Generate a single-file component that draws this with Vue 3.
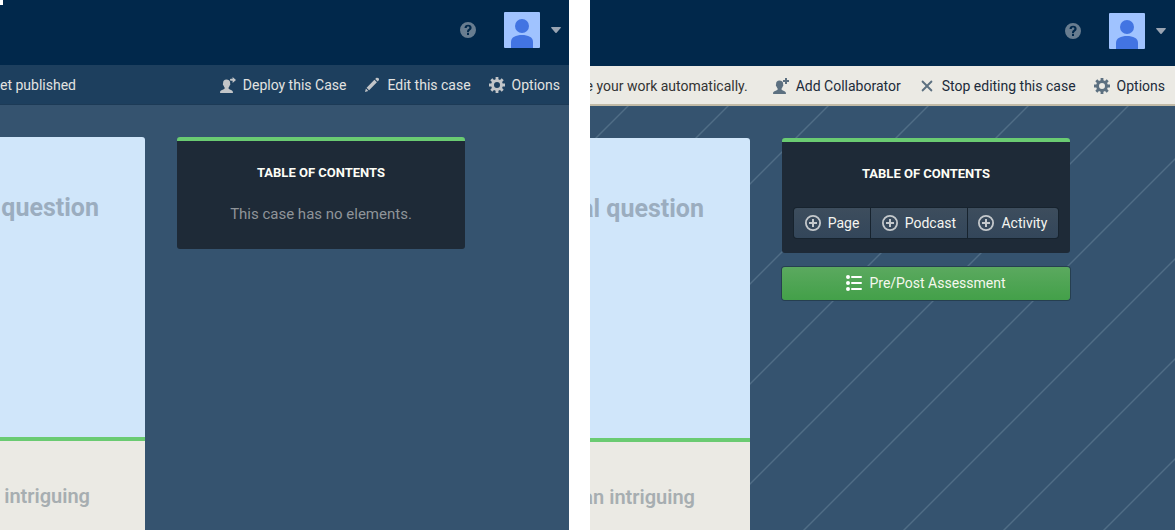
<script setup>
import { h } from 'vue'

const shapes = {
  deploy: [
    'M6.4 2.4C4.3 2.4 3 3.8 3.1 6c0 .7-.4.8-.2 1.6.2.7.6.8.7 1.2.2.8.7 1.1 1 1.6v1.2C4.3 12.7.1 13.2.1 15v1h12.8v-1c0-1.8-4-2.3-4.300-3.400v-1.200c.3-.5.8-.8 1-1.600.1-.4.5-.5.700-1.200.2-.8-.2-.9-.2-1.600V4.900C9.800 3.400 8.500 2.400 6.400 2.400z',
    'M12.6 0v1.800H10.900c-1.200 0-1.200 2 0 2H12.600v2.200L16 2.900z',
  ],
  collaborator: [
    'M6.4 2.4C4.3 2.4 3 3.8 3.1 6c0 .7-.4.8-.2 1.6.2.7.6.8.7 1.2.2.8.7 1.1 1 1.6v1.2C4.3 12.7.1 13.2.1 15v1h12.8v-1c0-1.8-4-2.3-4.300-3.400v-1.200c.3-.5.8-.8 1-1.600.1-.4.5-.5.700-1.200.2-.8-.2-.9-.2-1.600V4.900C9.800 3.400 8.500 2.400 6.400 2.400z',
    'M12 0h2v2h2v2h-2v2h-2V4h-2V2h2z',
  ],
  edit: ['M12.1 1.1c.7-.6 2-.4 2.5.2.6.7.6 1.7 0 2.3l-.9.9-2.5-2.5zM10.4 2.8l2.5 2.5-7.8 7.9-2.5-2.5zM1.9 11.5l2.4 2.4L1 15z'],
  cross: ['M4.200 2.800 8 6.600l3.800-3.800c.9-.7 2 .4 1.400 1.400L9.400 8l3.800 3.800c.6 1-.5 2.100-1.400 1.400L8 9.400l-3.800 3.800c-.9.7-2-.4-1.400-1.400L6.600 8 2.800 4.200c-.6-1 .5-2.100 1.400-1.400z'],
  cog: ['M6.600 0h2.800v2.300l1.600.6 1.700-1.600 2 2-1.600 1.700.6 1.600H16v2.800h-2.300l-.6 1.600 1.600 1.700-2 2-1.700-1.600-1.600.6V16H6.600v-2.300L5 13.100l-1.700 1.600-2-2L2.900 11l-.6-1.600H0V6.600h2.300L2.900 5 1.300 3.300l2-2L5 2.900l1.600-.6zM8 5a3 3 0 1 0 0 6 3 3 0 0 0 0-6z'],
  add: ['M8 0a8 8 0 1 0 0 16A8 8 0 0 0 8 0zm0 1.800a6.200 6.200 0 1 1 0 12.400A6.200 6.200 0 0 1 8 1.800z', 'M7 4h2v3h3v2H9v3H7V9H4V7h3z'],
  list: ['M2 0a2 2 0 1 0 0 4 2 2 0 0 0 0-4zM2 6a2 2 0 1 0 0 4 2 2 0 0 0 0-4zM2 12a2 2 0 1 0 0 4 2 2 0 0 0 0-4zM6 1h9a1 1 0 0 1 0 2H6a1 1 0 0 1 0-2zM6 7h9a1 1 0 0 1 0 2H6a1 1 0 0 1 0-2zM6 13h9a1 1 0 0 1 0 2H6a1 1 0 0 1 0-2z'],
  help: ['M8 0a8 8 0 1 0 0 16A8 8 0 0 0 8 0zM7 11h2v2H7zM4.500 6C4.500 3.900 5.900 2.700 8.100 2.700S11.600 3.900 11.600 5.700c0 1.600-1 2.200-1.700 2.800C9.200 9.100 9 9.400 9 10.200H7c0-1.500.3-2.200 1.100-2.900.7-.5 1.300-.9 1.300-1.600 0-.7-.5-1.100-1.300-1.100S6.800 5.100 6.800 6z'],
}

const Icon = (props) =>
  h('svg', { viewBox: '0 0 16 16', width: 16, height: 16, 'aria-hidden': 'true', fill: 'currentColor', 'fill-rule': 'evenodd' },
    shapes[props.name].map((d) => h('path', { d })))
Icon.props = ['name']

const panes = [
  {
    id: 'reading',
    editing: false,
    status: 'et published',
    title: 'question',
    summary: 'intriguing',
    actions: [
      { icon: 'deploy', label: 'Deploy this Case' },
      { icon: 'edit', label: 'Edit this case' },
      { icon: 'cog', label: 'Options' },
    ],
  },
  {
    id: 'editing',
    editing: true,
    status: 'e your work automatically.',
    title: 'al question',
    summary: 'an intriguing',
    actions: [
      { icon: 'collaborator', label: 'Add Collaborator' },
      { icon: 'cross', label: 'Stop editing this case' },
      { icon: 'cog', label: 'Options' },
    ],
  },
]

const elements = ['Page', 'Podcast', 'Activity']
</script>

<template>
  <div class="comparison">
    <section v-for="pane in panes" :key="pane.id" class="pane" :class="{ editing: pane.editing }">
      <header class="topbar">
        <button class="bare help" aria-label="Help"><Icon name="help" /></button>
        <button class="bare account" aria-label="Account">
          <svg class="avatar" viewBox="0 0 36 36" width="36" height="36" aria-hidden="true">
            <rect width="36" height="36" rx="1" fill="#a0c3ff" />
            <circle cx="18" cy="14" r="7" fill="#4274e2" />
            <path d="M7 36v-6c0-5 5-7 11-7s11 2 11 7v6z" fill="#4274e2" />
          </svg>
          <svg class="caret" viewBox="0 0 10 6" width="10" height="6" aria-hidden="true">
            <path d="M.8 0h8.400c.7 0 1 .6.5 1.100L5.600 5.700q-.6.6-1.200 0L.3 1.100C-.2.600.1 0 .8 0z" fill="#99a4b2" />
          </svg>
        </button>
      </header>

      <nav class="toolbar">
        <span class="status">{{ pane.status }}</span>
        <button v-for="action in pane.actions" :key="action.label" class="bare action">
          <Icon :name="action.icon" /><span>{{ action.label }}</span>
        </button>
      </nav>

      <main class="content">
        <svg v-if="pane.editing" class="stripes" aria-hidden="true">
          <defs>
            <pattern id="diagonals" width="100" height="100" patternUnits="userSpaceOnUse">
              <path d="M-2 40 40-2M36 102 102 36" stroke="#506d86" stroke-width="1.4" fill="none" />
            </pattern>
          </defs>
          <rect width="100%" height="100%" fill="url(#diagonals)" />
        </svg>
        <article class="card">
          <div class="cover"><h1>{{ pane.title }}</h1></div>
          <div class="summary"><p>{{ pane.summary }}</p></div>
        </article>
        <aside class="side">
          <div class="toc">
            <h2>Table of Contents</h2>
            <div v-if="pane.editing" class="group">
              <button v-for="name in elements" :key="name"><Icon name="add" /><span>{{ name }}</span></button>
            </div>
            <p v-else class="empty">This case has no elements.</p>
          </div>
          <button v-if="pane.editing" class="assessment"><Icon name="list" /><span>Pre/Post Assessment</span></button>
        </aside>
      </main>
      <span v-if="!pane.editing" class="corner"></span>
    </section>
  </div>
</template>

<style>
body {
  margin: 0;
  background: #fff;
}
</style>

<style scoped>
.comparison {
  display: grid;
  grid-template-columns: minmax(0, 569fr) minmax(0, 585fr);
  column-gap: 21px;
  height: 100vh;
  font: 14px/18px Roboto, "Liberation Sans", sans-serif;
}
.pane {
  position: relative;
  display: flex;
  flex-direction: column;
  overflow: hidden;
  background: #35536f;
}
.corner {
  position: absolute;
  top: 0;
  left: 0;
  width: 3px;
  height: 5px;
  background: #fff;
}
button {
  font: inherit;
  cursor: pointer;
}
.bare {
  padding: 0;
  border: 0;
  background: none;
  color: inherit;
}
svg {
  display: block;
  flex: none;
}
.topbar {
  display: flex;
  flex: none;
  align-items: center;
  justify-content: flex-end;
  gap: 28px;
  box-sizing: border-box;
  height: 65px;
  padding: 0 8px 5px 0;
  background: #01284b;
}
.editing .topbar {
  height: 66px;
  padding: 0 9px 4px 0;
}
.help {
  color: #687d90;
}
.account {
  display: flex;
  align-items: center;
  gap: 11px;
}
.toolbar {
  display: flex;
  flex: none;
  align-items: center;
  gap: 18px;
  box-sizing: border-box;
  height: 40px;
  padding: 1px 9px 0 0;
  border-bottom: 1px solid #1c3a56;
  background: #1d3f5e;
  color: #e2e3e1;
  white-space: nowrap;
}
.editing .toolbar {
  padding: 2px 10px 0 0;
  border-bottom: 2px solid #c1baa6;
  background: #ebeae4;
  color: #1c2b3a;
}
.status {
  display: flex;
  flex: 1;
  min-width: 0;
}
.editing .status {
  justify-content: flex-end;
  margin-right: 7px;
  color: #333;
}
.action {
  display: flex;
  align-items: center;
  gap: 7px;
}
.action svg {
  color: #c2c5c8;
}
.editing .action svg {
  color: #5c7080;
}
.content {
  position: relative;
  display: flex;
  flex: 1;
  gap: 32px;
  min-height: 0;
  padding: 32px 104px 0 0;
}
.editing .content {
  padding-right: 105px;
}
.stripes {
  position: absolute;
  inset: 0;
  width: 100%;
  height: 100%;
}
.card {
  position: relative;
  display: flex;
  flex: 1;
  flex-direction: column;
  min-width: 0;
  overflow: hidden;
  border-radius: 0 3px 0 0;
  white-space: nowrap;
}
.cover {
  display: flex;
  justify-content: flex-end;
  box-sizing: border-box;
  height: 304px;
  padding: 56px 46px 0 0;
  border-bottom: 4px solid #6acb72;
  background: #d0e6fa;
}
h1 {
  margin: 0;
  color: #9badbf;
  font-size: 25px;
  font-weight: 700;
  line-height: 30px;
}
.summary {
  display: flex;
  flex: 1;
  justify-content: flex-end;
  padding: 43px 55px 0 0;
  background: #ebeae4;
}
.summary p {
  margin: 0;
  color: #a7aeb1;
  font-size: 20px;
  font-weight: 600;
  line-height: 24px;
}
.side {
  position: relative;
  flex: none;
  width: 288px;
}
.toc {
  padding: 23px 12px 15px;
  border-top: 4px solid #6acb72;
  border-radius: 3px;
  background: #1e2a37;
  text-align: center;
}
h2 {
  margin: 0;
  color: #fdfdf6;
  font-size: 13px;
  font-weight: 700;
  line-height: 18px;
  text-transform: uppercase;
}
.empty {
  margin: 22px 0 10px;
  color: #8f9499;
  font-size: 15px;
  line-height: 20px;
}
.group {
  display: flex;
  gap: 1px;
  margin-top: 25px;
  border-radius: 3px;
  background: #17232e;
  box-shadow: 0 0 0 1px #17232e;
}
.group button {
  display: flex;
  flex: 1 1 auto;
  align-items: center;
  justify-content: center;
  gap: 7px;
  height: 30px;
  padding: 0;
  border: 0;
  background: linear-gradient(#3d4d5d, #33465a);
  color: #f5f5f0;
}
.group button:first-child {
  border-radius: 3px 0 0 3px;
}
.group button:last-child {
  border-radius: 0 3px 3px 0;
}
.group svg {
  color: #c5c9cc;
}
.assessment {
  display: flex;
  align-items: center;
  justify-content: center;
  gap: 7px;
  width: 100%;
  height: 33px;
  margin-top: 14px;
  padding: 0 0 1px;
  border: 0;
  border-radius: 3px;
  background: linear-gradient(#5ba95f, #43a049);
  box-shadow: 0 0 0 1px #263f50;
  color: #f5f8ee;
}
.assessment svg {
  color: #fff;
}
</style>
